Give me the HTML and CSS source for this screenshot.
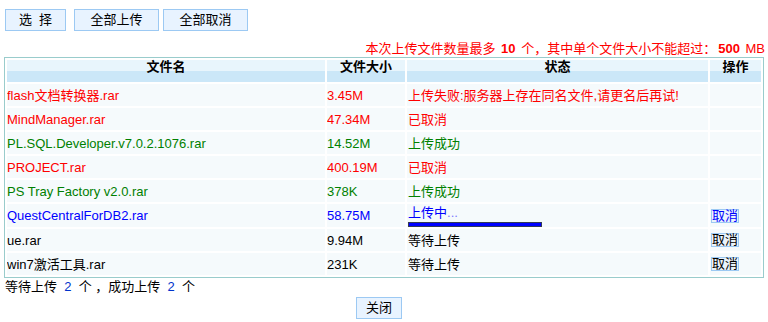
FILE: index.html
```html
<!DOCTYPE html>
<html lang="zh-CN">
<head>
<meta charset="utf-8">
<title>上传</title>
<link rel="stylesheet" href="styles.css">
</head>
<body>
<div class="page">
  <div class="toolbar">
    <button class="btn btn-select">选&nbsp;&nbsp;择</button>
    <button class="btn btn-wide btn-upload">全部上传</button>
    <button class="btn btn-wide">全部取消</button>
  </div>
  <div class="notice">本次上传文件数量最多 <b>10</b> 个，其中单个文件大小不能超过：<b>500</b> MB</div>
  <table class="files">
    <colgroup>
      <col class="c-name"><col class="c-size"><col class="c-status"><col class="c-op">
    </colgroup>
    <thead>
      <tr><th>文件名</th><th>文件大小</th><th>状态</th><th>操作</th></tr>
    </thead>
    <tbody>
      <tr class="err"><td>flash文档转换器.rar</td><td>3.45M</td><td>上传失败:服务器上存在同名文件,请更名后再试!</td><td></td></tr>
      <tr class="err"><td>MindManager.rar</td><td>47.34M</td><td>已取消</td><td></td></tr>
      <tr class="ok"><td>PL.SQL.Developer.v7.0.2.1076.rar</td><td>14.52M</td><td>上传成功</td><td></td></tr>
      <tr class="err"><td>PROJECT.rar</td><td>400.19M</td><td>已取消</td><td></td></tr>
      <tr class="ok"><td>PS Tray Factory v2.0.rar</td><td>378K</td><td>上传成功</td><td></td></tr>
      <tr class="busy"><td>QuestCentralForDB2.rar</td><td>58.75M</td><td class="st-busy"><div class="busy-text">上传中<span class="dots">...</span></div><div class="bar"><div class="bar-fill" style="width:100%"></div></div></td><td><button class="cancel">取消</button></td></tr>
      <tr><td>ue.rar</td><td>9.94M</td><td>等待上传</td><td><button class="cancel">取消</button></td></tr>
      <tr><td>win7激活工具.rar</td><td>231K</td><td>等待上传</td><td><button class="cancel">取消</button></td></tr>
    </tbody>
  </table>
  <div class="summary">等待上传&nbsp; <span class="num">2</span>&nbsp; 个 ，成功上传&nbsp; <span class="num">2</span>&nbsp; 个</div>
  <div class="closebar"><button class="btn btn-close">关闭</button></div>
</div>
</body>
</html>
```
FILE: styles.css
```css
html, body {
  margin: 0;
  padding: 0;
  background: #ffffff;
}
body {
  font-family: "Liberation Sans", "Noto Sans CJK SC", sans-serif;
  font-size: 13px;
  color: #000;
}
.page {
  padding: 9px 0 0 4px;
  width: 764px;
}
.toolbar {
  display: flex;
  padding-left: 1px;
  height: 22px;
}
.btn {
  font-family: "Liberation Sans", "Noto Sans CJK SC", sans-serif;
  font-size: 13px;
  color: #000;
  background: #e8f3ff;
  border: 1px solid #9cc9f3;
  height: 22px;
  padding: 0;
  margin: 0;
  line-height: 18px;
  cursor: pointer;
}
.btn-select { width: 61px; }
.btn-wide { width: 85px; margin-left: 4px; }
.btn-upload { margin-left: 8px; }
.notice {
  color: #ff0000;
  text-align: right;
  padding: 10px 0 0 0;
  line-height: 16px;
  height: 16px;
  margin-right: 3px;
}
.notice b { font-weight: bold; padding: 0 2px; }
.files {
  border: 1px solid #99cccc;
  border-collapse: separate;
  border-spacing: 2px;
  table-layout: fixed;
  width: 760px;
}
.c-name { width: 318px; }
.c-size { width: 78px; }
.c-status { width: 301px; }
.c-op { width: 51px; }
.files th {
  height: 22px;
  padding: 0;
  font-weight: bold;
  text-align: center;
  vertical-align: top;
  line-height: 14px;
  background: linear-gradient(#e8f5fc 0, #e8f5fc 50%, #cbe7f8 50%, #cbe7f8 100%);
}
.files td {
  height: 22px;
  padding: 0;
  background: #f5fafc;
  vertical-align: middle;
  line-height: 15px;
  white-space: nowrap;
  overflow: hidden;
}
.files td:nth-child(3) { padding-left: 1px; }
.files td:nth-child(4) { padding-left: 1px; }
.err td { color: #ff0000; }
.ok td { color: #008000; }
.busy td { color: #0000ff; }
.files td.st-busy { vertical-align: top; }
.busy-text { line-height: 16px; padding-top: 1px; }
.dots { color: #7b7bff; }
.bar {
  margin-top: 1px;
  width: 132px;
  height: 3px;
  border: 1px solid #333a55;
  background: #ffffff;
}
.bar-fill { height: 3px; background: #0000ff; }
.cancel {
  font-family: "Liberation Sans", "Noto Sans CJK SC", sans-serif;
  font-size: 13px;
  color: inherit;
  background: #eaf3fb;
  border: 1px solid #9cc9f3;
  width: 28px;
  height: 14px;
  padding: 0;
  margin: 0;
  line-height: 12px;
  display: block;
}
.summary {
  padding-left: 1px;
  line-height: 18px;
  height: 18px;
}
.num { color: #0033cc; }
.closebar {
  display: flex;
  justify-content: center;
  padding-right: 14px;
  margin-top: 1px;
}
.btn-close { width: 46px; }
```
